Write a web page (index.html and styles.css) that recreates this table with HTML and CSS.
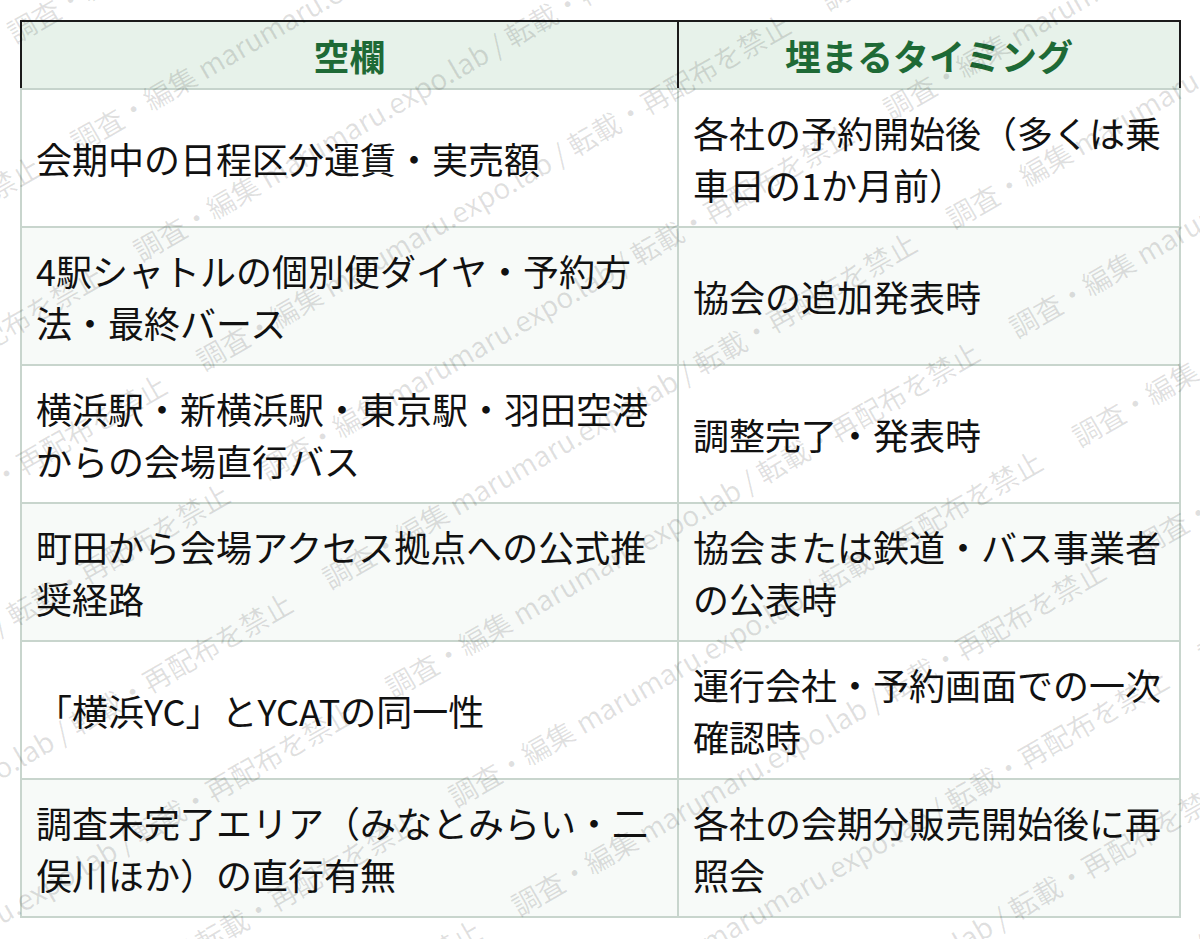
FILE: index.html
```html
<!DOCTYPE html>
<html lang="ja">
<head>
<meta charset="utf-8">
<title>空欄と埋まるタイミング</title>
<link rel="stylesheet" href="styles.css">
</head>
<body>
<div class="page">
  <table class="gap-table">
    <colgroup><col class="col-a"><col class="col-b"></colgroup>
    <thead>
      <tr><th>空欄</th><th>埋まるタイミング</th></tr>
    </thead>
    <tbody>
      <tr><td>会期中の日程区分運賃・実売額</td><td>各社の予約開始後（多くは乗車日の1か月前）</td></tr>
      <tr><td>4駅シャトルの個別便ダイヤ・予約方法・最終バース</td><td>協会の追加発表時</td></tr>
      <tr><td>横浜駅・新横浜駅・東京駅・羽田空港からの会場直行バス</td><td>調整完了・発表時</td></tr>
      <tr><td>町田から会場アクセス拠点への公式推奨経路</td><td>協会または鉄道・バス事業者の公表時</td></tr>
      <tr><td>「横浜YC」とYCATの同一性</td><td>運行会社・予約画面での一次確認時</td></tr>
      <tr><td>調査未完了エリア（みなとみらい・二俣川ほか）の直行有無</td><td>各社の会期分販売開始後に再照会</td></tr>
    </tbody>
  </table>
  <div class="wm" aria-hidden="true">
    <div class="wm-inner">
      <div class="wm-row"><span>調査・編集 marumaru.expo.lab / 転載・再配布を禁止</span><span>調査・編集 marumaru.expo.lab / 転載・再配布を禁止</span><span>調査・編集 marumaru.expo.lab / 転載・再配布を禁止</span></div>
      <div class="wm-row"><span>調査・編集 marumaru.expo.lab / 転載・再配布を禁止</span><span>調査・編集 marumaru.expo.lab / 転載・再配布を禁止</span><span>調査・編集 marumaru.expo.lab / 転載・再配布を禁止</span></div>
      <div class="wm-row"><span>調査・編集 marumaru.expo.lab / 転載・再配布を禁止</span><span>調査・編集 marumaru.expo.lab / 転載・再配布を禁止</span><span>調査・編集 marumaru.expo.lab / 転載・再配布を禁止</span></div>
      <div class="wm-row"><span>調査・編集 marumaru.expo.lab / 転載・再配布を禁止</span><span>調査・編集 marumaru.expo.lab / 転載・再配布を禁止</span><span>調査・編集 marumaru.expo.lab / 転載・再配布を禁止</span></div>
      <div class="wm-row"><span>調査・編集 marumaru.expo.lab / 転載・再配布を禁止</span><span>調査・編集 marumaru.expo.lab / 転載・再配布を禁止</span><span>調査・編集 marumaru.expo.lab / 転載・再配布を禁止</span></div>
      <div class="wm-row"><span>調査・編集 marumaru.expo.lab / 転載・再配布を禁止</span><span>調査・編集 marumaru.expo.lab / 転載・再配布を禁止</span><span>調査・編集 marumaru.expo.lab / 転載・再配布を禁止</span></div>
      <div class="wm-row"><span>調査・編集 marumaru.expo.lab / 転載・再配布を禁止</span><span>調査・編集 marumaru.expo.lab / 転載・再配布を禁止</span><span>調査・編集 marumaru.expo.lab / 転載・再配布を禁止</span></div>
      <div class="wm-row"><span>調査・編集 marumaru.expo.lab / 転載・再配布を禁止</span><span>調査・編集 marumaru.expo.lab / 転載・再配布を禁止</span><span>調査・編集 marumaru.expo.lab / 転載・再配布を禁止</span></div>
      <div class="wm-row"><span>調査・編集 marumaru.expo.lab / 転載・再配布を禁止</span><span>調査・編集 marumaru.expo.lab / 転載・再配布を禁止</span><span>調査・編集 marumaru.expo.lab / 転載・再配布を禁止</span></div>
      <div class="wm-row"><span>調査・編集 marumaru.expo.lab / 転載・再配布を禁止</span><span>調査・編集 marumaru.expo.lab / 転載・再配布を禁止</span><span>調査・編集 marumaru.expo.lab / 転載・再配布を禁止</span></div>
      <div class="wm-row"><span>調査・編集 marumaru.expo.lab / 転載・再配布を禁止</span><span>調査・編集 marumaru.expo.lab / 転載・再配布を禁止</span><span>調査・編集 marumaru.expo.lab / 転載・再配布を禁止</span></div>
      <div class="wm-row"><span>調査・編集 marumaru.expo.lab / 転載・再配布を禁止</span><span>調査・編集 marumaru.expo.lab / 転載・再配布を禁止</span><span>調査・編集 marumaru.expo.lab / 転載・再配布を禁止</span></div>
      <div class="wm-row"><span>調査・編集 marumaru.expo.lab / 転載・再配布を禁止</span><span>調査・編集 marumaru.expo.lab / 転載・再配布を禁止</span><span>調査・編集 marumaru.expo.lab / 転載・再配布を禁止</span></div>
    </div>
  </div>
</div>
</body>
</html>
```
FILE: styles.css
```css
html, body {
  margin: 0;
  padding: 0;
  background: #ffffff;
}

body {
  font-family: "Noto Sans CJK JP", "Noto Sans", sans-serif;
  color: #111111;
}

.page {
  position: relative;
  box-sizing: border-box;
  width: 1200px;
  height: 939px;
  padding: 20px;
  overflow: hidden;
}

.gap-table {
  border-collapse: collapse;
  table-layout: fixed;
  width: 1161px;
}

.col-a {
  width: 657px;
}

.gap-table th {
  background: #e7f2ea;
  color: #1e6a36;
  font-weight: 700;
  font-size: 36px;
  line-height: 52px;
  padding: 7px 16px;
  text-align: center;
  border: 2px solid #1b1b1b;
  border-bottom-color: #c6d4cc;
}

.gap-table td {
  font-size: 36px;
  line-height: 52px;
  padding: 16px 14px 16px 14px;
  text-align: left;
  vertical-align: middle;
  border: 2px solid #c8d5cd;
}

.gap-table tbody tr:nth-child(even) td {
  background: #f7faf8;
}

.wm {
  position: absolute;
  inset: 0;
  overflow: hidden;
  pointer-events: none;
}

.wm-inner {
  position: absolute;
  left: -300px;
  top: -330px;
  width: 1800px;
  height: 1600px;
  box-sizing: border-box;
  padding-top: 64px;
  transform: rotate(-30deg);
  transform-origin: 50% 50%;
}

.wm-row {
  white-space: nowrap;
  font-size: 28px;
  line-height: 126px;
  height: 126px;
  text-indent: -114px;
  color: rgba(0, 0, 0, 0.12);
}

.wm-row span {
  display: inline-block;
  text-indent: 0;
  margin-right: 40px;
}
```
